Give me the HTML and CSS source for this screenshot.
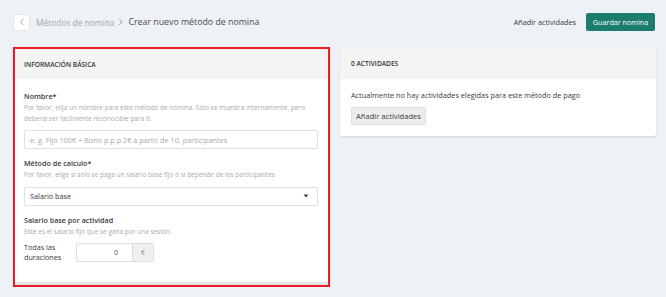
FILE: index.html
```html
<!DOCTYPE html>
<html lang="es">
<head>
<meta charset="utf-8">
<title>Crear nuevo método de nomina</title>
<link rel="stylesheet" href="styles.css">
</head>
<body>
<div class="page">
  <header class="topbar">
    <div class="crumbs">
      <button class="back" aria-label="Volver">
        <svg width="6" height="8" viewBox="0 0 6 8"><path d="M4.5 0.8 L1.5 4 L4.5 7.2" fill="none" stroke="#9aa0a6" stroke-width="0.9"/></svg>
      </button>
      <span class="crumb-link">Métodos de nomina</span>
      <svg class="crumb-sep" width="5" height="8" viewBox="0 0 5 8"><path d="M1 0.8 L4 4 L1 7.2" fill="none" stroke="#8a8f95" stroke-width="0.9"/></svg>
      <span class="crumb-current">Crear nuevo método de nomina</span>
    </div>
    <div class="actions">
      <span class="link-action">Añadir actividades</span>
      <button class="btn-primary">Guardar nomina</button>
    </div>
  </header>

  <main class="columns">
    <section class="card card-highlight">
      <div class="card-head">Información básica</div>
      <div class="card-body">
        <div class="field">
          <div class="label">Nombre*</div>
          <div class="help">Por favor, elija un nombre para este método de nómina. Sólo se muestra internamente, pero debería ser fácilmente reconocible para ti.</div>
          <div class="input placeholder">e. g. Fijo 100€ + Bono p.p.p 2€ a partir de 10. participantes</div>
        </div>
        <div class="field">
          <div class="label">Método de calculo*</div>
          <div class="help">Por favor, elige si sólo se paga un salario base fijo o si depende de los participantes</div>
          <div class="input select">
            <span>Salario base</span>
            <svg width="6" height="4" viewBox="0 0 6 4"><path d="M0.5 0.5 L5.5 0.5 L3 3.5 Z" fill="#444"/></svg>
          </div>
        </div>
        <div class="field">
          <div class="label">Salario base por actividad</div>
          <div class="help">Este es el salario fijo que se gana por una sesión.</div>
          <div class="amount-row">
            <div class="amount-label">Todas las<br>duraciones</div>
            <div class="input-group">
              <div class="amount-input">0</div>
              <div class="addon">€</div>
            </div>
          </div>
        </div>
      </div>
      <div class="card-foot"></div>
    </section>

    <section class="card">
      <div class="card-head">0 actividades</div>
      <div class="card-body card-body-right">
        <p class="empty">Actualmente no hay actividades elegidas para este método de pago</p>
        <button class="btn-secondary">Añadir actividades</button>
      </div>
    </section>
  </main>
</div>
</body>
</html>
```

FILE: styles.css
```css
* { box-sizing: border-box; }

body {
  margin: 0;
  background: #eef1f5;
  font-family: "Open Sans", "Liberation Sans", sans-serif;
  color: #3b3b3b;
}

.page {
  padding: 13px 11px 0 13px;
}

.topbar {
  display: flex;
  align-items: center;
  justify-content: space-between;
  height: 18px;
}

.crumbs {
  display: flex;
  align-items: center;
}

.back {
  width: 17px;
  height: 17px;
  padding: 0;
  margin: 0 6px 0 0;
  background: #fff;
  border: 1px solid #e4e7eb;
  border-radius: 2px;
  display: flex;
  align-items: center;
  justify-content: center;
}

.crumb-link {
  font-size: 8.4px;
  color: #a2a6ab;
}

.crumb-sep {
  margin: 0 5px 0 4px;
}

.crumb-current {
  font-size: 8.8px;
  color: #4a4d50;
}

.actions {
  display: flex;
  align-items: center;
}

.link-action {
  font-size: 7.3px;
  color: #3a3d40;
  margin-right: 10px;
}

.btn-primary {
  height: 18px;
  width: 69px;
  padding: 0;
  border: 0;
  border-radius: 2px;
  background: #1c7d6c;
  color: #fff;
  font-family: inherit;
  font-size: 7.2px;
}

.columns {
  margin-top: 16px;
  display: grid;
  grid-template-columns: 317px 316px;
  column-gap: 10px;
  align-items: start;
}

.card {
  background: #fff;
  border-radius: 2px;
  box-shadow: 0 1px 2px rgba(0,0,0,0.12);
  overflow: hidden;
}

.card-highlight {
  border: 2px solid #ec1c24;
  border-radius: 0;
}

.card-head {
  height: 32px;
  display: flex;
  align-items: center;
  padding: 0 11px;
  background: #f4f4f4;
  font-size: 6.6px;
  font-weight: 600;
  text-transform: uppercase;
  color: #333;
}

.card-highlight .card-head {
  height: 30px;
  padding: 0 9px;
}

.card-body {
  padding: 12px 10px 14px 9px;
}

.field + .field {
  margin-top: 9px;
}

.label {
  font-size: 7.2px;
  font-weight: 600;
  color: #3a3a3a;
  line-height: 11px;
}

.help {
  margin-top: 1px;
  font-size: 6.5px;
  line-height: 10.5px;
  color: #a8abaf;
  padding-right: 6px;
}

.input {
  margin-top: 6px;
  height: 19px;
  border: 1px solid #dcdfe3;
  border-radius: 2px;
  padding: 0 8px 0 5px;
  display: flex;
  align-items: center;
  font-size: 7.3px;
  color: #3a3a3a;
}

.placeholder {
  color: #a7aaae;
}

.select {
  justify-content: space-between;
}

.amount-row {
  margin-top: 5px;
  display: flex;
  align-items: center;
}

.amount-label {
  width: 52px;
  font-size: 7.2px;
  line-height: 10px;
  color: #3a3a3a;
}

.input-group {
  display: flex;
  height: 19px;
  width: 78px;
  border: 1px solid #dcdfe3;
  border-radius: 2px;
  overflow: hidden;
}

.amount-input {
  flex: 1;
  display: flex;
  align-items: center;
  justify-content: flex-end;
  padding-right: 14px;
  font-size: 7.2px;
  color: #555;
}

.addon {
  width: 21px;
  background: #efefef;
  border-left: 1px solid #dcdfe3;
  display: flex;
  align-items: center;
  justify-content: center;
  font-size: 6.8px;
  color: #8a8d90;
}

.card-foot {
  height: 3px;
  background: #e3e4e6;
}

.card-highlight .card-body {
  padding-bottom: 20px;
}

.card-body-right {
  padding: 10px 11px 11px 11px;
}

.empty {
  margin: 0;
  font-size: 7.3px;
  line-height: 12px;
  color: #3a3a3a;
}

.btn-secondary {
  margin-top: 6px;
  height: 18px;
  width: 75px;
  padding: 0;
  background: #ececec;
  border: 1px solid #e0e0e0;
  border-radius: 2px;
  font-family: inherit;
  font-size: 7.6px;
  color: #3a3a3a;
}
```
